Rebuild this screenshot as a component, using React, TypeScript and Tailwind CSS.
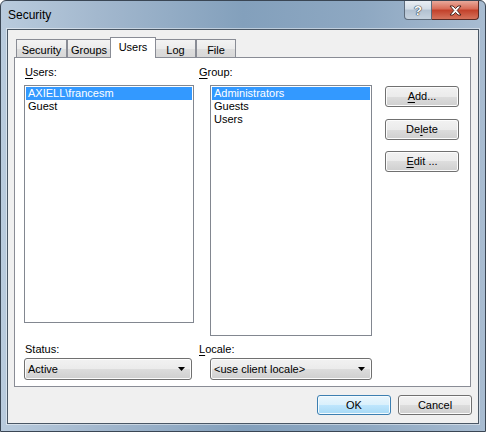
import React from "react";

const btnBg =
  "bg-[linear-gradient(#f2f2f2_0%,#ebebeb_50%,#dddddd_50%,#cfcfcf_100%)] shadow-[inset_0_0_0_1px_#fcfcfc]";

function U({ children }: { children: React.ReactNode }) {
  return <span className="underline underline-offset-[2px] decoration-[1px]">{children}</span>;
}

function Button({
  children,
  className = "",
  primary = false,
}: {
  children: React.ReactNode;
  className?: string;
  primary?: boolean;
}) {
  return (
    <div
      className={
        "flex items-center justify-center rounded-[3px] border leading-[13px] " +
        (primary
          ? "border-[#3c7fb1] bg-[linear-gradient(#eaf6fd_0%,#d9f0fc_50%,#bee6fd_50%,#a7d9f5_100%)] shadow-[inset_0_0_0_1px_#f4fbfe] "
          : "border-[#707070] " + btnBg + " ") +
        className
      }
    >
      {children}
    </div>
  );
}

function Combo({ text, className = "" }: { text: string; className?: string }) {
  return (
    <div
      className={
        "flex items-center justify-between rounded-[3px] border border-[#707070] pl-[3px] pr-[6px] leading-[13px] " +
        btnBg +
        " " +
        className
      }
    >
      <span>{text}</span>
      <svg width="7" height="4" viewBox="0 0 7 4">
        <polygon points="0,0 7,0 3.5,4" fill="#000" />
      </svg>
    </div>
  );
}

function ListBox({
  items,
  className = "",
}: {
  items: { t: string; sel?: boolean }[];
  className?: string;
}) {
  return (
    <div className={"border border-[#828790] bg-white p-[1px] " + className}>
      {items.map((it) => (
        <div
          key={it.t}
          className={
            "h-[13px] pl-[2px] leading-[13px] " + (it.sel ? "bg-[#3399ff] text-white" : "text-black")
          }
        >
          {it.t}
        </div>
      ))}
    </div>
  );
}

function Tab({ label, w, selected = false }: { label: string; w: string; selected?: boolean }) {
  if (selected) {
    return (
      <div
        className={
          "relative z-10 -mx-[1px] -mb-[1px] flex h-[21px] justify-center border border-b-0 border-[#898c95] bg-white pt-[3px] leading-[13px] " +
          w
        }
      >
        {label}
      </div>
    );
  }
  return (
    <div
      className={
        "flex h-[18px] justify-center border border-b-0 border-[#898c95] bg-[linear-gradient(#f3f3f3_0%,#ebebeb_50%,#dedede_51%,#d8d8d8_100%)] pt-[4px] leading-[13px] " +
        w
      }
    >
      {label}
    </div>
  );
}

export default function App() {
  return (
    <div className="h-[432px] w-[486px] bg-white">
      <div className="flex h-[432px] w-[486px] flex-col overflow-hidden rounded-t-[6px] border border-[#3a4654] bg-[linear-gradient(90deg,#b9cbdd_0%,#a3b8ce_20%,#83a0bc_50%,#8ea8c2_75%,#a8bcd1_100%)] font-['Liberation_Sans',Arial,sans-serif] text-[11px] text-black">
        {/* Title bar */}
        <div className="flex h-[28px] items-start justify-between">
          <div className="pl-[7px] pt-[7px] text-[12px] leading-[15px] text-black">Security</div>
          <div className="mr-[6px] flex">
            <div className="flex h-[19px] w-[28px] items-center justify-center rounded-bl-[4px] border border-t-0 border-[#5d6b7b] bg-[linear-gradient(#e9eef4_0%,#d2dce6_45%,#b2c1d1_50%,#c7d3df_100%)]">
              <span className="text-[13px] font-bold leading-[13px] text-white [text-shadow:0_0_1px_#2a3440,0_0_1px_#2a3440,0_0_1px_#2a3440]">
                ?
              </span>
            </div>
            <div className="flex h-[19px] w-[47px] items-center justify-center rounded-br-[4px] border border-l-0 border-t-0 border-[#5a2a24] bg-[linear-gradient(#e9a99b_0%,#d86a55_45%,#c2402a_50%,#d5735c_100%)]">
              <svg width="13" height="11" viewBox="0 0 13 11">
                <path
                  d="M1 1 L4 1 L6.5 3.6 L9 1 L12 1 L8.2 5.5 L12 10 L9 10 L6.5 7.4 L4 10 L1 10 L4.8 5.5 Z"
                  fill="#fff"
                  stroke="#3b1a15"
                  strokeWidth="0.9"
                  strokeLinejoin="round"
                />
              </svg>
            </div>
          </div>
        </div>

        {/* Client area */}
        <div className="mx-[6px] flex h-[395px] flex-col border border-[#4a5765] bg-[#f0f0f0] shadow-[0_0_0_1px_rgba(255,255,255,0.45)]">
          {/* Tabs */}
          <div className="flex h-[27px] items-end pl-[8px]">
            <Tab label="Security" w="w-[51px]" />
            <Tab label="Groups" w="w-[44px]" />
            <Tab label="Users" w="w-[46px]" selected />
            <Tab label="Log" w="w-[41px]" />
            <Tab label="File" w="w-[40px]" />
          </div>

          {/* Panel */}
          <div className="ml-[6px] flex h-[330px] w-[457px] border border-[#898c95] bg-white pl-[9px] pt-[8px]">
            <div className="flex w-[170px] flex-col">
              <div className="h-[13px] pl-[1px] leading-[13px]">
                <U>U</U>sers:
              </div>
              <ListBox
                className="mt-[6px] h-[238px]"
                items={[{ t: "AXIELL\\francesm", sel: true }, { t: "Guest" }]}
              />
              <div className="mt-[20px] h-[13px] pl-[1px] leading-[13px]">Status:</div>
              <Combo text="Active" className="mt-[2px] h-[22px] w-[168px]" />
            </div>

            <div className="ml-[5px] flex w-[173px] flex-col">
              <div className="h-[13px] leading-[13px]">
                <U>G</U>roup:
              </div>
              <ListBox
                className="ml-[11px] mt-[6px] h-[251px] w-[162px]"
                items={[{ t: "Administrators", sel: true }, { t: "Guests" }, { t: "Users" }]}
              />
              <div className="mt-[7px] h-[13px] leading-[13px]">
                <U>L</U>ocale:
              </div>
              <Combo text="<use client locale>" className="ml-[11px] mt-[2px] h-[22px] w-[162px]" />
            </div>

            <div className="ml-[13px] flex w-[74px] flex-col pt-[20px]">
              <Button className="h-[21px]">
                <U>A</U>dd...
              </Button>
              <Button className="mt-[12px] h-[21px]">
                De<U>l</U>ete
              </Button>
              <Button className="mt-[11px] h-[21px]">
                <U>E</U>dit ...
              </Button>
            </div>
          </div>

          {/* Bottom buttons */}
          <div className="mt-[8px] flex justify-end gap-[7px] pr-[6px]">
            <Button primary className="h-[20px] w-[74px]">
              OK
            </Button>
            <Button className="h-[20px] w-[74px]">Cancel</Button>
          </div>
        </div>
      </div>
    </div>
  );
}
